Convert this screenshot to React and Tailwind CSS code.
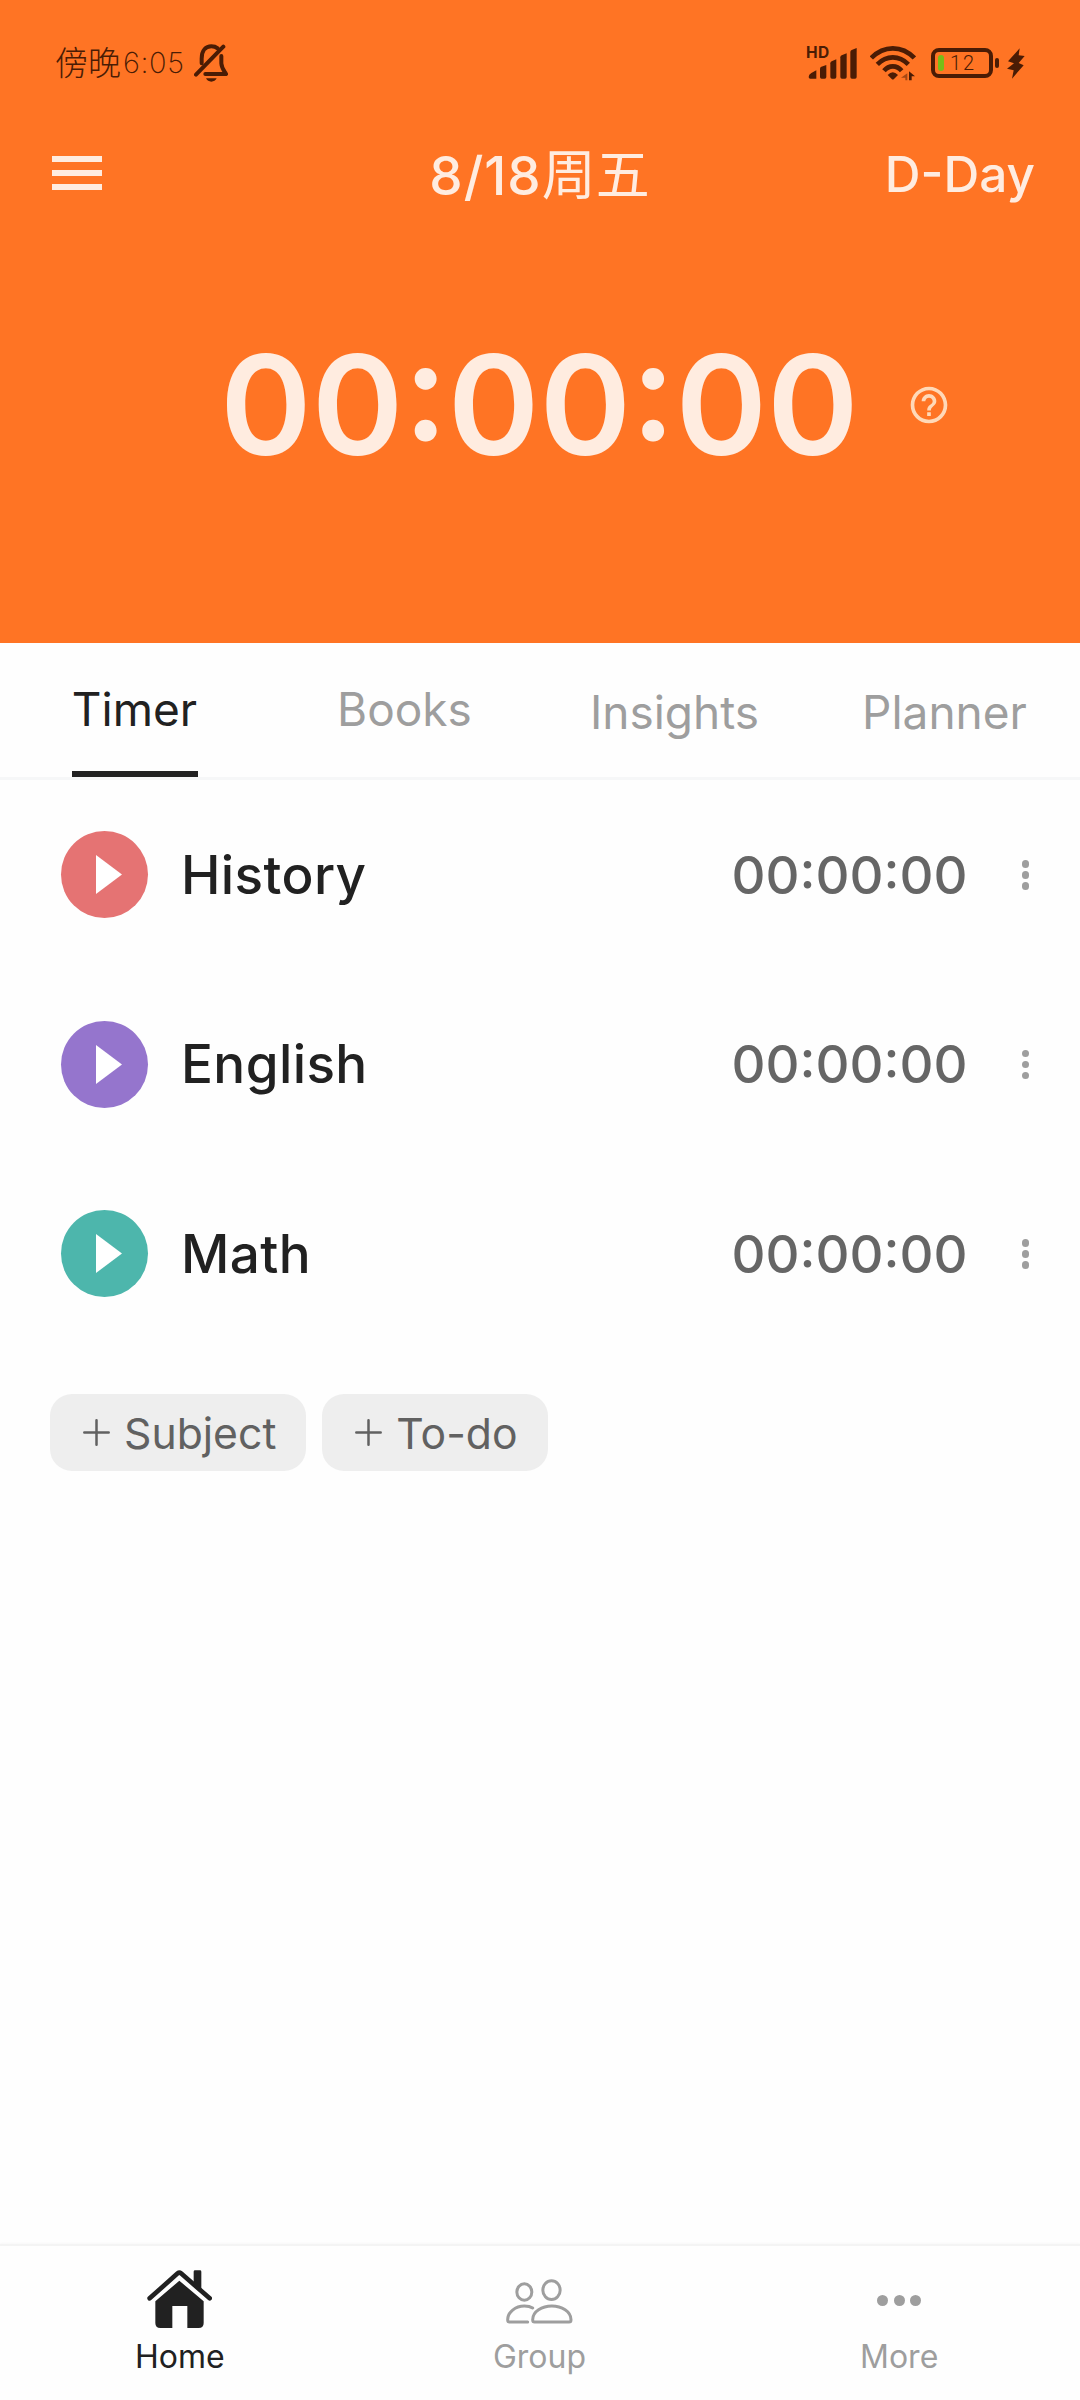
import React, { useState } from 'react';
import { MdHelpOutline } from 'react-icons/md';

const subjects = [
    { name: 'History', time: '00:00:00', color: 'bg-[#e57373]' },
    { name: 'English', time: '00:00:00', color: 'bg-[#9575cd]' },
    { name: 'Math', time: '00:00:00', color: 'bg-[#4db6ac]' },
];

const tabs = [
    { name: 'Timer', pad: 'pt-[39px]' },
    { name: 'Books', pad: 'pt-[39px]' },
    { name: 'Insights', pad: 'pt-[42px]' },
    { name: 'Planner', pad: 'pt-[42px]' },
];

const BellOffIcon = () => (
    <svg className="w-[34px] h-[38px]" viewBox="496 74 102 114" fill="none" stroke="currentColor" strokeWidth="12" strokeLinecap="round" strokeLinejoin="round">
        <path d="M519 132V118C519 92 532 81 548 81c8 0 14 2 19 6" />
        <path d="M578 110v22c1 14 8 22 14 32h-62" />
        <path d="M584 82L502 166" />
        <path d="M532 177h32q-5 10-16 10t-16-10z" fill="currentColor" stroke="none" />
    </svg>
);

const SignalIcon = () => (
    <div className="relative w-[50px] h-[32px]">
        <span className="absolute left-[-1px] top-[-2px] text-[15.500px] leading-[16px] font-bold tracking-[0.500px]">HD</span>
        <svg className="w-[50px] h-[32px]" viewBox="52 82 150 96" fill="currentColor">
            <path d="M57 172q0-8 8-12l15-8v25H62q-5 0-5-5z" />
            <path d="M91 147q0-4 4-6l15-5v36q0 5-5 5h-9q-5 0-5-5z" />
            <path d="M122 131q0-4 4-6l14-6v53q0 5-5 5h-8q-5 0-5-5z" />
            <path d="M152 113q0-4 4-6l15-6v71q0 5-5 5h-9q-5 0-5-5z" />
            <path d="M182 97q0-4 4-6l15-6v87q0 5-5 5h-9q-5 0-5-5z" />
        </svg>
    </div>
);

const WifiIcon = () => (
    <svg className="w-[46px] h-[35px]" viewBox="240 80 138 105" fill="none" stroke="currentColor" strokeWidth="14">
        <path d="M244 116Q272 87 308.500 87T373 116" />
        <path d="M262 135Q283 114 308.500 114T355 135" />
        <path d="M282 154Q293 141 308.500 141T335 154" />
        <path d="M293 167q15-16 31 0l-12 12q-4 3-7 0z" fill="currentColor" stroke="none" />
        <path d="M352 162v21h-6v-8h-13z" fill="currentColor" stroke="none" opacity="0.5" />
        <path d="M357 183v-27l18 15h-10v12z" fill="currentColor" stroke="none" />
    </svg>
);

const BatteryIcon = () => (
    <div className="flex items-center gap-[2px]">
        <div className="flex items-center w-[62px] h-[30px] rounded-[8px] border-4 border-current pl-[3px]">
            <div className="w-[6px] h-[16px] rounded-full bg-[#78bd18]" />
            <span className="ml-[6px] font-['Roboto'] font-light text-[20px] leading-[20px] tracking-[2px]">12</span>
        </div>
        <div className="w-[4px] h-[10px] rounded-full bg-current" />
    </div>
);

const BoltIcon = () => (
    <svg className="w-[18px] h-[31px]" viewBox="652 83 54 93" fill="currentColor">
        <path d="M690 84L655 123l18 6-21 16 20 5-5 25 35-40-15-7 18-21-18-2z" />
    </svg>
);

const HomeIcon = () => (
    <svg className="w-[65px] h-[58px]" viewBox="0 0 195 174" fill="currentColor">
        <path d="M8 85L92 10q5-4 10 0L188 85" fill="none" stroke="currentColor" strokeWidth="14" strokeLinecap="round" />
        <path d="M140 5q0-4 4-4h15q4 0 4 4v62l-23-20z" />
        <path d="M97 32l73 62v65q0 15-15 15h-34v-66H76v66H40q-15 0-15-15V94z" />
    </svg>
);

const GroupIcon = () => (
    <svg className="w-[67px] h-[45px]" viewBox="0 0 201 135" fill="none" stroke="currentColor" strokeWidth="9" strokeLinecap="round">
        <ellipse cx="55" cy="39" rx="22.500" ry="24.500" />
        <ellipse cx="136.500" cy="33.500" rx="26" ry="28" />
        <path d="M80 122C80 98 108 81 137.500 81S195 98 195 122q0 7-6 7H86q-6 0-6-7z" />
        <path d="M80 87C74 83 65 81 55 81 28 81 5 100 5 122q0 7 6 7h54" />
    </svg>
);

const MoreIcon = () => (
    <div className="flex gap-[5.500px]">
        <div className="size-[11px] rounded-full bg-current" />
        <div className="size-[11px] rounded-full bg-current" />
        <div className="size-[11px] rounded-full bg-current" />
    </div>
);

const navItems = [
    { name: 'Home', Icon: HomeIcon, pad: 'pt-[24px]' },
    { name: 'Group', Icon: GroupIcon, pad: 'pt-[33px]' },
    { name: 'More', Icon: MoreIcon, pad: 'pt-[49px]' },
];

const AddButton = ({ label }) => (
    <button className="flex items-center h-[77px] rounded-[22px] bg-[#eeeeee] pl-[33px] pr-[30px] text-[#616161]">
        <svg className="w-[27px] h-[27px] mr-[14px]" viewBox="0 0 27 27" stroke="currentColor" strokeWidth="2.500" strokeLinecap="round">
            <path d="M13.500 1.300v24.400M1.300 13.500h24.400" />
        </svg>
        <span className="pt-[3px] text-[42.700px] leading-[50px]">{label}</span>
    </button>
);

export default function App() {
    const [activeTab, setActiveTab] = useState('Timer');
    const [activeNav, setActiveNav] = useState('Home');

    return (
        <div className="flex flex-col w-[1080px] h-[2400px] overflow-hidden bg-[#fefefe] font-['Inter','Noto_Sans_CJK_SC',sans-serif]">
            <header className="h-[643px] shrink-0 bg-[#ff7424] text-[#ffece0]">
                {/* Status bar */}
                <div className="flex items-center justify-between h-[126px] pl-[55px] pr-[55px] text-[#4a1c05]">
                    <div className="flex items-center">
                        <span className="pb-[4px] font-['Noto_Sans_CJK_SC'] font-light text-[33px] leading-[40px]">傍晚</span>
                        <span className="ml-[2px] font-extralight text-[29px] leading-[40px] tracking-[0.600px]">6:05</span>
                        <div className="ml-[9px]"><BellOffIcon /></div>
                    </div>
                    <div className="flex items-center">
                        <SignalIcon />
                        <div className="ml-[13px] mr-[15px]"><WifiIcon /></div>
                        <BatteryIcon />
                        <div className="ml-[8px]"><BoltIcon /></div>
                    </div>
                </div>

                <div className="grid grid-cols-3 items-center h-[93px] pl-[52px] pr-[45px]">
                    <button className="flex flex-col gap-[8px] w-[50px]">
                        <span className="h-[6px] w-full bg-current" />
                        <span className="h-[6px] w-full bg-current" />
                        <span className="h-[6px] w-full bg-current" />
                    </button>
                    <h1 className="pt-[7px] pr-[8px] text-center whitespace-nowrap text-[53px] leading-[60px] font-medium">
                        <span className="tracking-[1px]">8/18</span>
                        <span className="text-[54px] font-normal">周五</span>
                    </h1>
                    <span className="pt-[3px] text-right text-[49.500px] leading-[60px] font-medium">D-Day</span>
                </div>

                <div className="grid grid-cols-[220px_638px_1fr] items-center h-[371px]">
                    <span />
                    <div className="text-center text-[139px] leading-[160px] font-semibold">00:00:00</div>
                    <MdHelpOutline className="ml-[49px] size-[44px] text-[#ffd9b8]" />
                </div>
            </header>

            {/* Tabs */}
            <nav className="grid grid-cols-4 h-[137px] shrink-0 border-b-[3px] border-[#f6f7f8]">
                {tabs.map((tab) => (
                    <button
                        key={tab.name}
                        onClick={() => setActiveTab(tab.name)}
                        className={`flex flex-col items-center ${tab.pad} ${activeTab === tab.name ? 'text-[#212121]' : 'text-[#9e9e9e]'}`}
                    >
                        <span className="pr-[1px] text-[46px] leading-[54px]">{tab.name}</span>
                        {activeTab === tab.name && <span className="mt-[35px] h-[6px] w-[126px] bg-[#212121]" />}
                    </button>
                ))}
            </nav>

            <main className="flex-1">
                {subjects.map((subject) => (
                    <div key={subject.name} className="flex items-center h-[189.500px] pl-[61px] pr-[51px]">
                        <button className={`flex items-center justify-center size-[87px] rounded-full ${subject.color}`}>
                            <svg className="ml-[8px] w-[26px] h-[39px]" viewBox="0 0 26 39" fill="#fff">
                                <path d="M0 0l26 19.500L0 39z" />
                            </svg>
                        </button>
                        <span className="ml-[33px] flex-1 text-[53px] leading-[64px] font-medium tracking-[0.400px] text-[#212121]">{subject.name}</span>
                        <span className="text-[52.700px] leading-[64px] font-medium text-[#666666]">{subject.time}</span>
                        <div className="ml-[54px] flex flex-col gap-[3.500px]">
                            <span className="size-[7.500px] rounded-full bg-[#9e9e9e]" />
                            <span className="size-[7.500px] rounded-full bg-[#9e9e9e]" />
                            <span className="size-[7.500px] rounded-full bg-[#9e9e9e]" />
                        </div>
                    </div>
                ))}

                <div className="flex gap-4 pl-[50px] pt-[45px]">
                    <AddButton label="Subject" />
                    <AddButton label="To-do" />
                </div>
            </main>

            {/* Bottom navigation */}
            <footer className="grid grid-cols-3 h-[156px] shrink-0 pr-px bg-[#fefefe] border-t-2 border-[#f4f4f4] shadow-[0_0_3px_rgba(0,0,0,0.05)]">
                {navItems.map(({ name, Icon, pad }) => (
                    <button
                        key={name}
                        onClick={() => setActiveNav(name)}
                        className={`flex flex-col items-center ${activeNav === name ? 'text-[#212121]' : 'text-[#9e9e9e]'}`}
                    >
                        <div className={`h-[91px] ${pad}`}><Icon /></div>
                        <span className="text-[32px] leading-[40px] font-normal">{name}</span>
                    </button>
                ))}
            </footer>
        </div>
    );
}
